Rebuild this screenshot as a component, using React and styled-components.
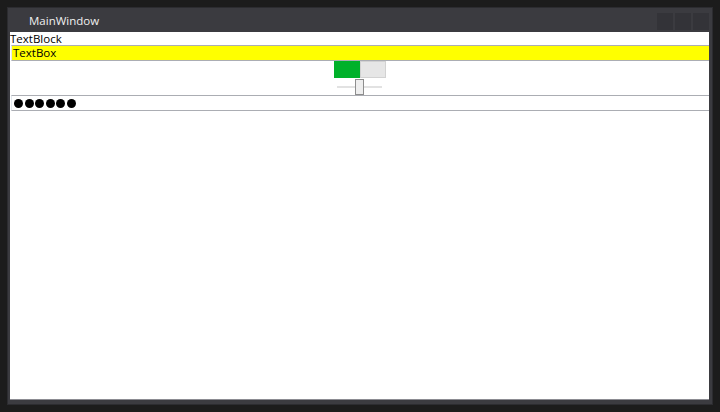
import React from 'react';
import styled, { createGlobalStyle } from 'styled-components';

const Global = createGlobalStyle`
  html, body {
    margin: 0;
    padding: 0;
    background: #1c1c1c;
  }
  body {
    width: 720px;
    height: 412px;
    overflow: hidden;
    font-family: "Open Sans", "Noto Sans", sans-serif;
  }
`;

const Desktop = styled.div`
  width: 720px;
  height: 412px;
  padding: 7px;
  box-sizing: border-box;
  background: #1c1c1c;
`;

const Window = styled.div`
  width: 706px;
  height: 398px;
  box-sizing: border-box;
  display: flex;
  flex-direction: column;
  background: #3b3b40;
  border: 1px solid #2c2c30;
  padding: 0 3px 4px 2px;
`;

const TitleBar = styled.div`
  height: 24px;
  display: flex;
  align-items: center;
  padding-left: 19px;
  color: #f0f0f0;
  font-size: 11.5px;
`;

const Title = styled.span`
  flex: 1;
`;

const Buttons = styled.div`
  display: flex;
  gap: 2px;
  margin-top: 2px;
`;

const CaptionButton = styled.div`
  width: 16px;
  height: 17px;
  background: #333338;
`;

const Content = styled.div`
  flex: 1;
  display: flex;
  flex-direction: column;
  background: #fff;
  border-bottom: 1px solid #8c8c92;
  font-size: 11.5px;
  color: #000;
`;

const TextBlock = styled.div`
  height: 13px;
  line-height: 13px;
`;

const TextBox = styled.div`
  height: 16px;
  box-sizing: border-box;
  margin-left: 1px;
  border: 1px solid #abadb3;
  border-left-color: #e3e9ef;
  border-right: none;
  background: ${p => p.bg || '#fff'};
  padding-left: 1px;
  line-height: 14px;
  display: flex;
  align-items: center;
`;

const Center = styled.div`
  display: flex;
  justify-content: center;
`;

const Toggle = styled.div`
  display: flex;
  height: 17px;
`;

const ToggleHalf = styled.div`
  width: 26px;
  box-sizing: border-box;
  background: ${p => (p.on ? '#00b12a' : '#e6e6e6')};
  border: 1px solid ${p => (p.on ? '#00b12a' : '#d2d2d2')};
`;

const Slider = styled.div`
  width: 45px;
  height: 17px;
  display: flex;
  align-items: center;
  justify-content: center;
  position: relative;
`;

const Track = styled.div`
  width: 45px;
  height: 2px;
  background: #e2e2e2;
`;

const Thumb = styled.div`
  position: absolute;
  left: 18px;
  top: 1px;
  width: 9px;
  height: 16px;
  box-sizing: border-box;
  border: 1px solid #8e8e8e;
  background: #eeeeee;
`;

const Dots = styled.div`
  display: flex;
  gap: 1.6px;
  padding-left: 1px;
`;

const Dot = styled.span`
  width: 9px;
  height: 9px;
  border-radius: 50%;
  background: #000;
`;

export default function App() {
  return (
    <Desktop>
      <Global />
      <Window>
        <TitleBar>
          <Title>MainWindow</Title>
          <Buttons>
            <CaptionButton />
            <CaptionButton />
            <CaptionButton />
          </Buttons>
        </TitleBar>
        <Content>
          <TextBlock>TextBlock</TextBlock>
          <TextBox bg="#ffff00">TextBox</TextBox>
          <Center>
            <Toggle>
              <ToggleHalf on />
              <ToggleHalf />
            </Toggle>
          </Center>
          <Center>
            <Slider>
              <Track />
              <Thumb />
            </Slider>
          </Center>
          <TextBox>
            <Dots>
              {[0, 1, 2, 3, 4, 5].map(i => (
                <Dot key={i} />
              ))}
            </Dots>
          </TextBox>
        </Content>
      </Window>
    </Desktop>
  );
}
